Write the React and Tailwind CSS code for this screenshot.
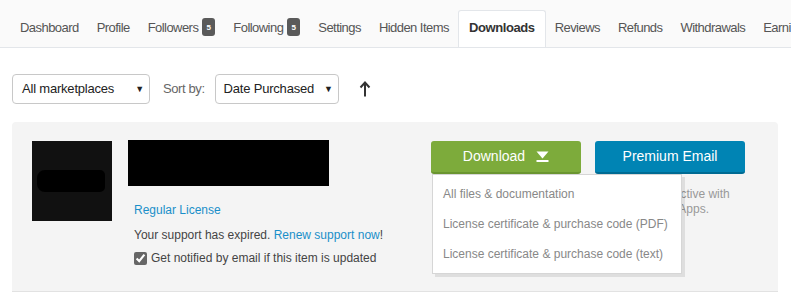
import { useState } from "react";

const tabs = [
  { label: "Dashboard" },
  { label: "Profile" },
  { label: "Followers", badge: 5 },
  { label: "Following", badge: 5 },
  { label: "Settings" },
  { label: "Hidden Items" },
  { label: "Downloads", active: true },
  { label: "Reviews" },
  { label: "Refunds" },
  { label: "Withdrawals" },
  { label: "Earnings" },
];

const menuItems = [
  "All files & documentation",
  "License certificate & purchase code (PDF)",
  "License certificate & purchase code (text)",
];

function Caret() {
  return <span className="text-[9px] text-[#222] leading-none">▼</span>;
}

export default function App() {
  const [notify, setNotify] = useState(true);

  return (
    <div
      className="w-[791px] h-[296px] overflow-hidden bg-white text-[#555]"
      style={{ fontFamily: '"Liberation Sans", Arial, sans-serif' }}
    >
      {/* tabs */}
      <div className="h-[48px] bg-[#fafafa] border-b border-[#e3e6ea] flex items-end pl-[11px] whitespace-nowrap overflow-hidden">
        {tabs.map((t) => (
          <div
            key={t.label}
            className={
              t.active
                ? "-mb-px h-[38px] px-[10px] pt-[8px] bg-white border border-b-0 border-[#e3e6ea] rounded-t-[3px] text-[13px] leading-[17px] font-bold text-[#333] tracking-[-0.4px] shrink-0"
                : "-mb-px h-[38px] px-[8px] pt-[8px] border border-transparent border-b-0 text-[13px] leading-[17px] text-[#555] tracking-[-0.55px] flex items-start shrink-0"
            }
          >
            <span>{t.label}</span>
            {t.badge && (
              <span className="ml-[4px] -mt-[1px] inline-flex items-center justify-center w-[13px] h-[18px] rounded-[3px] bg-[#5a5a5a] text-white text-[8px] font-bold tracking-normal">
                {t.badge}
              </span>
            )}
          </div>
        ))}
      </div>

      {/* filters */}
      <div className="flex items-center pl-[12px] mt-[26px] h-[30px]">
        <div className="w-[138px] h-[30px] border border-[#c8c8c8] rounded-[4px] flex items-center justify-between pl-[9px] pr-[5px] text-[13px] text-[#222] tracking-[-0.2px]">
          <span>All marketplaces</span>
          <Caret />
        </div>
        <span className="ml-[13px] text-[13px] text-[#666] tracking-[-0.4px]">Sort by:</span>
        <div className="ml-[10px] w-[124px] h-[30px] border border-[#c8c8c8] rounded-[4px] flex items-center justify-between pl-[8px] pr-[5px] text-[13px] text-[#222] tracking-[-0.2px]">
          <span>Date Purchased</span>
          <Caret />
        </div>
        <svg className="ml-[20px]" width="12" height="16" viewBox="0 0 12 16">
          <path d="M6 15.5V2.5" stroke="#333" strokeWidth="2" />
          <path d="M1.5 6.5L6 1.5L10.5 6.5" stroke="#333" strokeWidth="2" fill="none" />
        </svg>
      </div>

      {/* item panel */}
      <div className="ml-[12px] w-[766px] mt-[18px] bg-[#f4f4f4] rounded-t-[4px] border-b border-[#e2e2e2] flex pl-[20px] pr-[33px] pt-[19px] pb-[25px]">
        <div className="w-[80px] h-[80px] bg-[#111] pl-[5px] pt-[29px] shrink-0">
          <div className="w-[68px] h-[22px] bg-black rounded-l-[8px] rounded-r-[5px]" />
        </div>

        <div className="ml-[16px] flex-1 text-[12px]">
          <div className="-mt-px w-[201px] h-[46px] bg-black" />
          <div className="pl-[6px] mt-[16px] leading-[16px] text-[#1a8fc9]">Regular License</div>
          <div className="pl-[6px] mt-[9px] leading-[16px] text-[#444]">
            Your support has expired.{" "}
            <span className="text-[#1a8fc9]">Renew support now</span>!
          </div>
          <label className="pl-[6px] mt-[7px] leading-[16px] text-[#444] flex items-center">
            <input
              type="checkbox"
              checked={notify}
              onChange={() => setNotify(!notify)}
              className="w-[13px] h-[13px] m-0 mr-[4px] accent-[#666]"
            />
            Get notified by email if this item is updated
          </label>
        </div>

        <div className="w-[314px] shrink-0 relative">
          <div className="flex gap-[14px]">
            <button className="w-[150px] h-[33px] bg-[#7dab3b] border-b-2 border-[#6a9530] rounded-[3px] text-white text-[14px] flex items-center justify-center">
              Download
              <svg className="ml-[11px]" width="13" height="11" viewBox="0 0 13 11">
                <path d="M0.5 0.5H12.5L6.5 7.5Z" fill="white" />
                <rect x="0.5" y="9" width="12" height="2" fill="white" />
              </svg>
            </button>
            <button className="w-[150px] h-[33px] bg-[#0084b4] border-b-2 border-[#006b93] rounded-[3px] text-white text-[14px]">
              Premium Email
            </button>
          </div>
          <div className="ml-[170px] mt-[13px] text-[12px] leading-[15px] text-[#999]">
            Be more productive with
            <br />
            your Premium Apps.
          </div>

          {/* dropdown menu */}
          <div className="absolute left-[1px] top-[33px] w-[250px] bg-white border border-[#d6d6d6] shadow-[3px_3px_0_rgba(0,0,0,0.09)] py-[4px] z-10">
            {menuItems.map((m) => (
              <div
                key={m}
                className="h-[30px] flex items-center px-[10px] text-[12px] text-[#888] whitespace-nowrap"
              >
                {m}
              </div>
            ))}
          </div>
        </div>
      </div>
    </div>
  );
}
